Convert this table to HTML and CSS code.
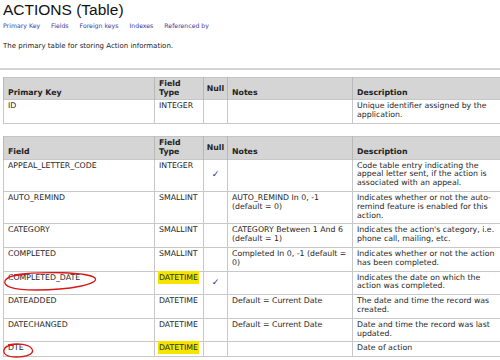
FILE: index.html
```html
<!DOCTYPE html>
<html lang="en">
<head>
    <meta charset="UTF-8">
    <title>ACTIONS (Table)</title>
    <link rel="stylesheet" href="styles.css">
</head>
<body>
    <h1 class="title">ACTIONS (Table)</h1>
    <div class="links">
        <a href="#pk">Primary Key</a>
        <a href="#fields">Fields</a>
        <a href="#fk">Foreign keys</a>
        <a href="#idx">Indexes</a>
        <a href="#ref">Referenced by</a>
    </div>
    <p class="summary">The primary table for storing Action information.</p>
    <div class="rule"></div>

    <table class="grid" id="pk">
        <colgroup>
            <col class="c-field"><col class="c-type"><col class="c-null"><col class="c-notes"><col class="c-desc">
        </colgroup>
        <thead>
            <tr>
                <th>Primary Key</th>
                <th>Field Type</th>
                <th class="null">Null</th>
                <th>Notes</th>
                <th>Description</th>
            </tr>
        </thead>
        <tbody>
            <tr>
                <td>ID</td>
                <td>INTEGER</td>
                <td class="null"></td>
                <td></td>
                <td>Unique identifier assigned by the application.</td>
            </tr>
        </tbody>
    </table>

    <table class="grid" id="fields">
        <colgroup>
            <col class="c-field"><col class="c-type"><col class="c-null"><col class="c-notes"><col class="c-desc">
        </colgroup>
        <thead>
            <tr>
                <th>Field</th>
                <th>Field Type</th>
                <th class="null">Null</th>
                <th>Notes</th>
                <th>Description</th>
            </tr>
        </thead>
        <tbody>
            <tr>
                <td>APPEAL_LETTER_CODE</td>
                <td>INTEGER</td>
                <td class="null"><span class="check">&#10003;</span></td>
                <td></td>
                <td>Code table entry indicating the appeal letter sent, if the action is associated with an appeal.</td>
            </tr>
            <tr>
                <td>AUTO_REMIND</td>
                <td>SMALLINT</td>
                <td class="null"></td>
                <td>AUTO_REMIND In 0, -1 (default = 0)</td>
                <td>Indicates whether or not the auto-remind feature is enabled for this action.</td>
            </tr>
            <tr>
                <td>CATEGORY</td>
                <td>SMALLINT</td>
                <td class="null"></td>
                <td>CATEGORY Between 1 And 6 (default = 1)</td>
                <td>Indicates the action's category, i.e. phone call, mailing, etc.</td>
            </tr>
            <tr>
                <td>COMPLETED</td>
                <td>SMALLINT</td>
                <td class="null"></td>
                <td>Completed In 0, -1 (default = 0)</td>
                <td>Indicates whether or not the action has been completed.</td>
            </tr>
            <tr>
                <td class="marked">COMPLETED_DATE
                    <svg class="ring ring-long" width="98" height="22" viewBox="0 0 98 22">
                        <path d="M12 4 C40 0, 86 1, 93 7 C98 13, 68 19, 34 19 C10 19, 1 15, 3 10 C5 5, 14 4, 26 3"/>
                    </svg>
                </td>
                <td><span class="hl">DATETIME</span></td>
                <td class="null"><span class="check">&#10003;</span></td>
                <td></td>
                <td>Indicates the date on which the action was completed.</td>
            </tr>
            <tr>
                <td>DATEADDED</td>
                <td>DATETIME</td>
                <td class="null"></td>
                <td>Default = Current Date</td>
                <td>The date and time the record was created.</td>
            </tr>
            <tr>
                <td>DATECHANGED</td>
                <td>DATETIME</td>
                <td class="null"></td>
                <td>Default = Current Date</td>
                <td>Date and time the record was last updated.</td>
            </tr>
            <tr>
                <td class="marked">DTE
                    <svg class="ring ring-short" width="34" height="17" viewBox="0 0 34 17">
                        <path d="M6 3 C16 1, 27 2, 30 7 C33 12, 24 15, 14 15 C5 15, 1 12, 2 8 C3 4, 7 3, 12 3"/>
                    </svg>
                </td>
                <td><span class="hl">DATETIME</span></td>
                <td class="null"></td>
                <td></td>
                <td>Date of action</td>
            </tr>
        </tbody>
    </table>
</body>
</html>
```

FILE: styles.css
```css
html {
    overflow: hidden;
}

body {
    margin: 0;
    padding: 0 0 0 3px;
    background: #fff;
    color: #262626;
    font-family: "DejaVu Sans", Verdana, sans-serif;
    font-size: 7.8px;
    line-height: 8.8px;
}

.title {
    margin: 0;
    padding-top: 1px;
    font-family: "Liberation Sans", Arial, sans-serif;
    font-size: 15.5px;
    line-height: 18px;
    font-weight: normal;
    color: #111;
}

.links {
    margin-top: 3px;
    font-size: 6.2px;
    line-height: 8px;
}

.links a {
    color: #3a3aa0;
    text-decoration: none;
    margin-right: 9px;
}

.summary {
    margin: 12px 0 0;
    font-size: 7px;
    color: #222;
}

.rule {
    height: 2px;
    margin: 17px 0 7px -3px;
    background: #d4d4d4;
}

.grid {
    table-layout: fixed;
    border-collapse: collapse;
    width: 506px;
    margin-bottom: 12px;
    border: 1px solid #c4c4c4;
}

.c-field { width: 151px; }
.c-type { width: 49px; }
.c-null { width: 24px; }
.c-notes { width: 125px; }

.grid th {
    background: #d5d5d5;
    color: #222;
    text-align: left;
    vertical-align: bottom;
    font-weight: bold;
    padding: 2px 4px 2px;
    border-left: 1px solid #b8b8b8;
}

.grid td {
    vertical-align: top;
    padding: 2px 4px 3px;
    border: 1px solid #c8c8c8;
}

.grid td.null {
    vertical-align: middle;
    text-align: center;
    padding: 0 2px;
}

.grid th.null {
    text-align: center;
    padding: 2px 2px 6px;
}

.check {
    color: #1c1c90;
    font-size: 9px;
    font-weight: bold;
}

.hl {
    background: #f5e400;
    padding: 2px 1px;
    margin-left: -1px;
}

.marked {
    position: relative;
}

.ring {
    position: absolute;
    left: -2px;
    top: -1px;
    fill: none;
    stroke: #d81818;
    stroke-width: 1.3;
}

.ring-short {
    top: 0;
}
```
